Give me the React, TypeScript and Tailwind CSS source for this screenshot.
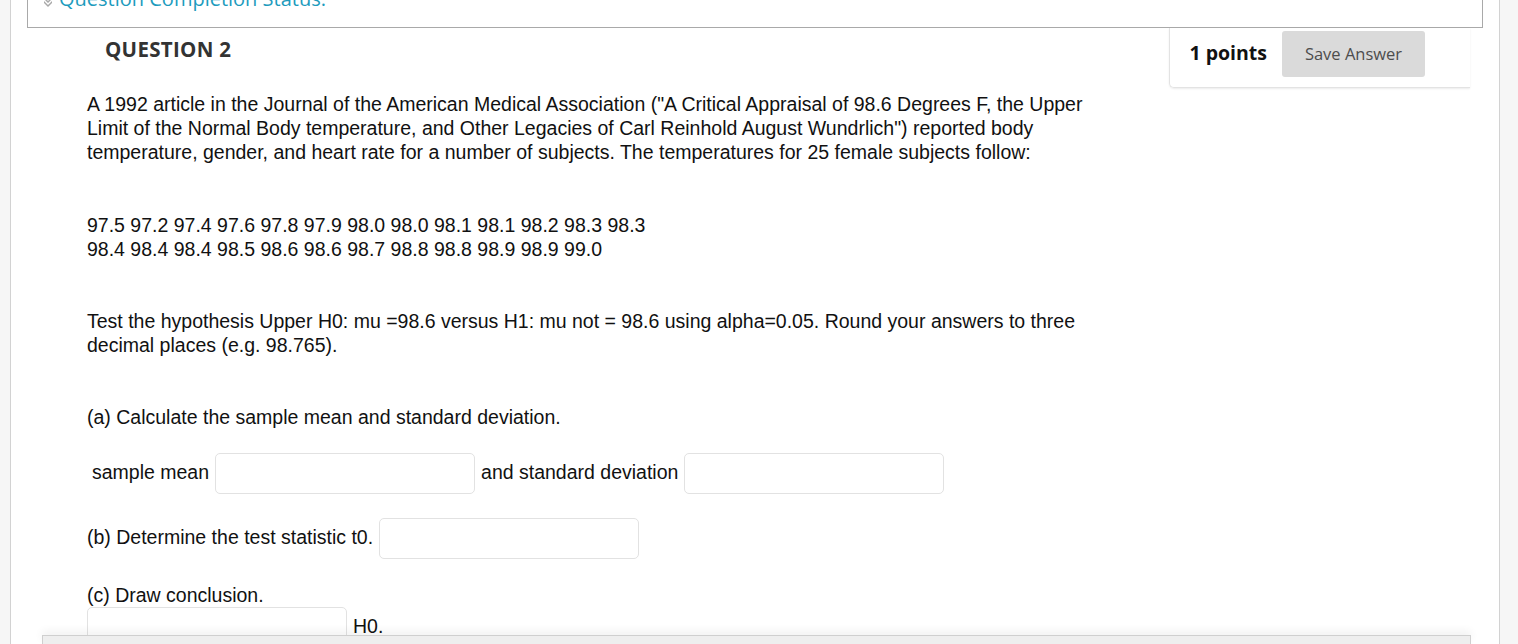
import React from "react";

function Field({ className = "" }: { className?: string }) {
  return (
    <input
      type="text"
      className={`h-[41px] w-[260px] shrink-0 rounded-[5px] border border-[#e2e2e2] bg-white px-2 outline-none ${className}`}
    />
  );
}

export default function App() {
  const body = "font-['Liberation_Sans',Arial,sans-serif] text-[19.5px] leading-[24px] text-[#111]";
  return (
    <div className="flex h-[644px] w-full overflow-hidden bg-white">
      {/* left gutter */}
      <div className="w-[11px] shrink-0 border-r border-[#d2d2d2] bg-[#f6f6f6]" />

      {/* main column */}
      <div className="flex min-w-0 flex-1 flex-col">
        {/* status box, scrolled partly out of view */}
        <div className="mx-[16px] h-[28px] shrink-0 overflow-hidden border-x border-b border-[#a9a9a9]">
          <div className="-mt-[13px] flex items-center gap-[6px] pl-[15px] font-['Open_Sans',sans-serif] text-[20px] leading-[24px] text-[#1d9bbd]">
            <svg width="10" height="12" viewBox="0 0 10 12" className="mt-[4px]">
              <path d="M1 2 L5 6 L9 2 L9 4 L5 8 L1 4 Z" fill="#a8a8a8" />
              <path d="M1 6 L5 10 L9 6 L9 8 L5 12 L1 8 Z" fill="#a8a8a8" />
            </svg>
            <span>Question Completion Status:</span>
          </div>
        </div>

        {/* question header */}
        <div className="flex items-start justify-between">
          <h2 className="mt-[8px] pl-[94px] font-['Open_Sans',sans-serif] text-[20.5px] font-bold leading-[27px] tracking-[0.3px] text-[#333]">
            QUESTION 2
          </h2>
          <div className="mr-[29px] flex items-center gap-[15px] rounded-bl-[5px] border-b border-l border-[#e3e3e3] pb-[10px] pl-[19px] pr-[45px] pt-[3px] shadow-[0_1px_2px_rgba(0,0,0,0.08)]">
            <span className="-mt-[2px] font-['Open_Sans',sans-serif] text-[19.5px] font-bold text-[#111]">1 points</span>
            <button className="h-[46px] w-[143px] rounded-[3px] bg-[#dadada] font-['Open_Sans',sans-serif] text-[16.5px] text-[#4d4d4d]">
              Save Answer
            </button>
          </div>
        </div>

        {/* question body */}
        <div className={`pl-[76px] ${body}`}>
          <p className="mt-[4px] max-w-[1010px]">
            A 1992 article in the Journal of the American Medical Association ("A Critical Appraisal of 98.6 Degrees F, the Upper
            Limit of the Normal Body temperature, and Other Legacies of Carl Reinhold August Wundrlich") reported body
            temperature, gender, and heart rate for a number of subjects. The temperatures for 25 female subjects follow:
          </p>
          <p className="mt-[49px]">
            97.5 97.2 97.4 97.6 97.8 97.9 98.0 98.0 98.1 98.1 98.2 98.3 98.3
            <br />
            98.4 98.4 98.4 98.5 98.6 98.6 98.7 98.8 98.8 98.9 98.9 99.0
          </p>
          <p className="mt-[48px] max-w-[1000px]">
            Test the hypothesis Upper H0: mu =98.6 versus H1: mu not = 98.6 using alpha=0.05. Round your answers to three
            decimal places (e.g. 98.765).
          </p>
          <p className="mt-[48px]">(a) Calculate the sample mean and standard deviation.</p>

          <div className="mt-[24px] flex items-center gap-[6px] pl-[5px]">
            <span className="mb-[3px]">sample mean</span>
            <Field />
            <span className="mb-[3px]">and standard deviation</span>
            <Field />
          </div>

          <div className="mt-[24px] flex items-center gap-[6px]">
            <span className="mb-[3px]">(b) Determine the test statistic t0.</span>
            <Field />
          </div>

          <p className="mt-[24px]">(c) Draw conclusion.</p>
          <div className="flex items-center gap-[6px]">
            <Field />
            <span className="mb-[3px]">H0.</span>
          </div>
        </div>
      </div>

      {/* right gutter */}
      <div className="w-[19px] shrink-0 border-l border-[#d2d2d2] bg-[#f6f6f6]" />

      {/* sticky footer bar peeking in at the bottom */}
      <div className="fixed bottom-0 left-[42px] h-[9px] w-[1429px] border border-b-0 border-[#cfcfcf] bg-[#eeeeee] shadow-[0_-4px_8px_rgba(0,0,0,0.06)]" />
    </div>
  );
}
